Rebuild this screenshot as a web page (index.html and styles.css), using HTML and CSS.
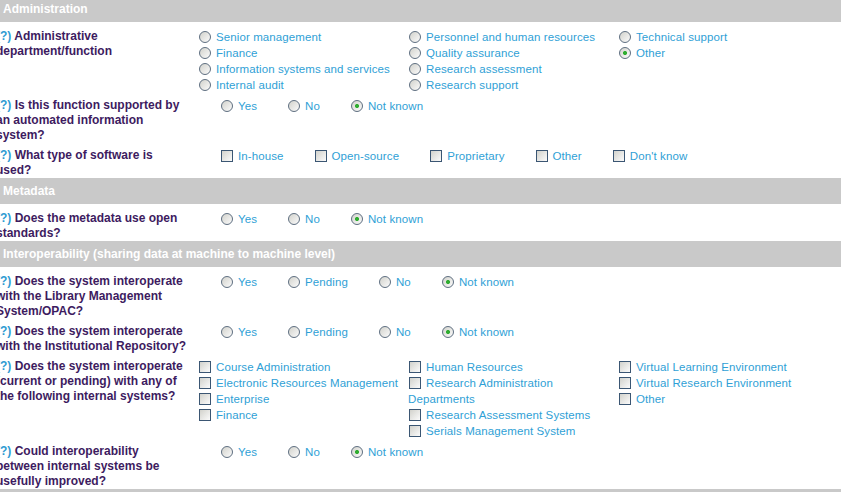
FILE: index.html
```html
<!DOCTYPE html>
<html lang="en">
<head>
    <meta charset="UTF-8">
    <title>Survey - Administration</title>
    <link rel="stylesheet" href="styles.css">
</head>
<body>
    <div class="form">
        <!-- Administration -->
        <div class="section-bar">Administration</div>

        <div class="q-row">
            <div class="q-label"><span class="help">(?)</span> Administrative department/function</div>
            <div class="q-options cols">
                <div class="opt-col">
                    <label class="opt"><input type="radio" name="dept">Senior management</label>
                    <label class="opt"><input type="radio" name="dept">Finance</label>
                    <label class="opt"><input type="radio" name="dept">Information systems and services</label>
                    <label class="opt"><input type="radio" name="dept">Internal audit</label>
                </div>
                <div class="opt-col">
                    <label class="opt"><input type="radio" name="dept">Personnel and human resources</label>
                    <label class="opt"><input type="radio" name="dept">Quality assurance</label>
                    <label class="opt"><input type="radio" name="dept">Research assessment</label>
                    <label class="opt"><input type="radio" name="dept">Research support</label>
                </div>
                <div class="opt-col">
                    <label class="opt"><input type="radio" name="dept">Technical support</label>
                    <label class="opt"><input type="radio" name="dept" checked>Other</label>
                </div>
            </div>
        </div>

        <div class="q-row">
            <div class="q-label"><span class="help">(?)</span> Is this function supported by an automated information system?</div>
            <div class="q-options inline">
                <label class="opt"><input type="radio" name="automated">Yes</label>
                <label class="opt"><input type="radio" name="automated">No</label>
                <label class="opt"><input type="radio" name="automated" checked>Not known</label>
            </div>
        </div>

        <div class="q-row">
            <div class="q-label"><span class="help">(?)</span> What type of software is used?</div>
            <div class="q-options inline">
                <label class="opt"><input type="checkbox">In-house</label>
                <label class="opt"><input type="checkbox">Open-source</label>
                <label class="opt"><input type="checkbox">Proprietary</label>
                <label class="opt"><input type="checkbox">Other</label>
                <label class="opt"><input type="checkbox">Don't know</label>
            </div>
        </div>

        <!-- Metadata -->
        <div class="section-bar">Metadata</div>

        <div class="q-row">
            <div class="q-label"><span class="help">(?)</span> Does the metadata use open standards?</div>
            <div class="q-options inline">
                <label class="opt"><input type="radio" name="metadata">Yes</label>
                <label class="opt"><input type="radio" name="metadata">No</label>
                <label class="opt"><input type="radio" name="metadata" checked>Not known</label>
            </div>
        </div>

        <!-- Interoperability -->
        <div class="section-bar">Interoperability (sharing data at machine to machine level)</div>

        <div class="q-row">
            <div class="q-label"><span class="help">(?)</span> Does the system interoperate with the Library Management System/OPAC?</div>
            <div class="q-options inline">
                <label class="opt"><input type="radio" name="lms">Yes</label>
                <label class="opt"><input type="radio" name="lms">Pending</label>
                <label class="opt"><input type="radio" name="lms">No</label>
                <label class="opt"><input type="radio" name="lms" checked>Not known</label>
            </div>
        </div>

        <div class="q-row">
            <div class="q-label"><span class="help">(?)</span> Does the system interoperate with the Institutional Repository?</div>
            <div class="q-options inline">
                <label class="opt"><input type="radio" name="repo">Yes</label>
                <label class="opt"><input type="radio" name="repo">Pending</label>
                <label class="opt"><input type="radio" name="repo">No</label>
                <label class="opt"><input type="radio" name="repo" checked>Not known</label>
            </div>
        </div>

        <div class="q-row">
            <div class="q-label"><span class="help">(?)</span> Does the system interoperate (current or pending) with any of the following internal systems?</div>
            <div class="q-options cols">
                <div class="opt-col">
                    <label class="opt"><input type="checkbox">Course Administration</label>
                    <label class="opt"><input type="checkbox">Electronic Resources Management</label>
                    <label class="opt"><input type="checkbox">Enterprise</label>
                    <label class="opt"><input type="checkbox">Finance</label>
                </div>
                <div class="opt-col">
                    <label class="opt"><input type="checkbox">Human Resources</label>
                    <label class="opt"><input type="checkbox">Research Administration Departments</label>
                    <label class="opt"><input type="checkbox">Research Assessment Systems</label>
                    <label class="opt"><input type="checkbox">Serials Management System</label>
                </div>
                <div class="opt-col">
                    <label class="opt"><input type="checkbox">Virtual Learning Environment</label>
                    <label class="opt"><input type="checkbox">Virtual Research Environment</label>
                    <label class="opt"><input type="checkbox">Other</label>
                </div>
            </div>
        </div>

        <div class="q-row">
            <div class="q-label"><span class="help">(?)</span> Could interoperability between internal systems be usefully improved?</div>
            <div class="q-options inline">
                <label class="opt"><input type="radio" name="improve">Yes</label>
                <label class="opt"><input type="radio" name="improve">No</label>
                <label class="opt"><input type="radio" name="improve" checked>Not known</label>
            </div>
        </div>

        <div class="section-bar"></div>
    </div>
</body>
</html>
```

FILE: styles.css
```css
* {
    box-sizing: border-box;
}

body {
    margin: 0;
    background: #fff;
    font-family: 'Liberation Sans', Arial, sans-serif;
    overflow: hidden;
}

.form {
    width: 845px;
    margin: -4px 0 0 -4px;
}

.section-bar {
    height: 26px;
    line-height: 26px;
    padding-left: 7px;
    margin-bottom: 2px;
    background: #c9c9c9;
    color: #fff;
    font-size: 12px;
    font-weight: bold;
}

.q-row {
    display: flex;
    padding-top: 5px;
}

.q-label {
    flex: none;
    width: 193px;
    font-size: 12px;
    font-weight: bold;
    line-height: 15px;
    color: #3d1b60;
}

.help {
    color: #2f9bd2;
}

.q-options {
    font-size: 11.5px;
    letter-spacing: 0.1px;
    line-height: 16px;
    color: #2f9fd6;
}

.q-options.cols {
    display: grid;
    grid-template-columns: repeat(3, 210px);
    padding-left: 9px;
}

.q-options.inline {
    display: flex;
    gap: 30px;
    padding-left: 31px;
}

.opt {
    display: block;
}

/* old-style form controls */
.opt input {
    appearance: none;
    -webkit-appearance: none;
    width: 12px;
    height: 12px;
    margin: 0 5px 0 1px;
    vertical-align: -2px;
    background: linear-gradient(135deg, #d2d2cc, #fbfbfb);
}

.opt input[type="radio"] {
    border: 1px solid #5e6e80;
    border-radius: 50%;
}

.opt input[type="radio"]:checked {
    background: radial-gradient(circle, #30ad30 0, #30ad30 1.6px, transparent 2.4px),
                linear-gradient(135deg, #d2d2cc, #fbfbfb);
}

.opt input[type="checkbox"] {
    border: 1px solid #3b5673;
}
```
